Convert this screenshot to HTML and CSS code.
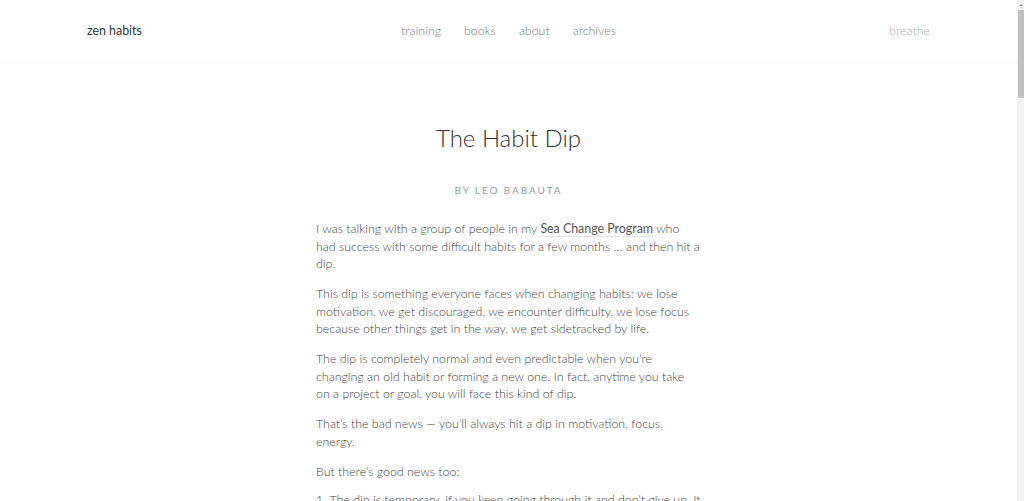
FILE: index.html
```html
<!DOCTYPE html>
<html lang="en">
<head>
<meta charset="utf-8">
<title>The Habit Dip — zen habits</title>
<link rel="stylesheet" href="styles.css">
</head>
<body>
<div class="page">
<header class="site-header">
  <a class="logo" href="#">zen habits</a>
  <nav class="main-nav">
    <a href="#">training</a>
    <a href="#">books</a>
    <a href="#">about</a>
    <a href="#">archives</a>
  </nav>
  <a class="breathe" href="#">breathe</a>
</header>
<main class="post">
  <h1 class="post-title">The Habit Dip</h1>
  <p class="byline">by Leo Babauta</p>
  <div class="post-body">
    <p>I was talking with a group of people in my <a href="#">Sea Change Program</a> who had success with some difficult habits for a few months … and then hit a dip.</p>
    <p>This dip is something everyone faces when changing habits: we lose motivation, we get discouraged, we encounter difficulty, we lose focus because other things get in the way, we get sidetracked by life.</p>
    <p>The dip is completely normal and even predictable when you’re changing an old habit or forming a new one. In fact, anytime you take on a project or goal, you will face this kind of dip.</p>
    <p>That’s the bad news — you’ll always hit a dip in motivation, focus, energy.</p>
    <p>But there’s good news too:</p>
    <ol>
      <li>The dip is temporary, if you keep going through it and don’t give up. It will pass, and you’ll come out the other side stronger.</li>
      <li>You can learn to navigate the dip, so that it doesn’t derail you. It becomes a skill you can use for any habit or project.</li>
      <li>Once you’ve gone through it a few times, you’ll know that it’s just a phase, and you won’t be so discouraged by it.</li>
    </ol>
    <p>So let’s talk about how to get through the dip.</p>
    <h2>Why We Hit the Dip</h2>
    <p>At the start of a new habit, we are excited and motivated. We have a vision of how great things will be, and that carries us through the first few weeks.</p>
    <p>But then the novelty wears off. Things get hard. Life gets in the way. We miss a day, then two, and start to feel bad about ourselves.</p>
    <p>This is when most people quit. They think they’ve failed, that they don’t have the discipline, that there’s something wrong with them.</p>
    <p>But nothing is wrong. This is just the dip, and it happens to everyone.</p>
    <h2>How to Get Through the Dip</h2>
    <p>First, expect it. Know that it’s coming, and when it arrives, greet it like an old friend: “Ah, there you are, dip.”</p>
    <p>Second, recommit. Remind yourself why you started this habit in the first place. What was the deeper reason?</p>
    <p>Third, make it easier. Lower the bar so that you can keep going even when motivation is low. Just show up.</p>
    <p>Fourth, get support. Tell someone you’re in the dip. Join a group of people who are doing the same thing.</p>
    <p>The dip is temporary. Keep going, and you’ll come out the other side.</p>
  </div>
</main>
</div>
<div class="scrollbar" aria-hidden="true">
  <div class="scroll-up"><span class="arrow"></span></div>
  <div class="scroll-thumb"></div>
  <div class="scroll-track"></div>
</div>
</body>
</html>
```

FILE: styles.css
```css
html {
  height: 100%;
  background: #fff;
  overflow: clip;
}
body {
  margin: 0;
  height: 100%;
  display: flex;
  overflow: clip;
  font-family: Lato, "Noto Sans", sans-serif;
  font-weight: 300;
  color: #555;
  background: #fff;
}
a {
  text-decoration: none;
  color: inherit;
}
.page {
  flex: 1;
  min-width: 0;
  height: 100%;
  overflow: clip;
  display: flex;
  flex-direction: column;
}
.scrollbar {
  width: 7px;
  height: 100%;
  flex: none;
  display: flex;
  flex-direction: column;
  background: #f1f1f1;
}
.scroll-up {
  height: 10px;
  display: flex;
  align-items: center;
  justify-content: center;
}
.arrow {
  width: 0;
  height: 0;
  border-left: 2px solid transparent;
  border-right: 2px solid transparent;
  border-bottom: 2px solid #a3a3a3;
}
.scroll-thumb {
  height: 88px;
  margin-left: 1px;
  background: #c1c1c1;
}
.scroll-track {
  flex: 1;
}
.site-header {
  flex: none;
  display: grid;
  grid-template-columns: 1fr auto 1fr;
  align-items: center;
  box-sizing: border-box;
  height: 64px;
  padding: 0 87px 3px 87px;
  border-bottom: 1px solid #f4f4f4;
}
.logo {
  justify-self: start;
  font-size: 12.4px;
  font-weight: 400;
  color: #333;
}
.main-nav {
  display: flex;
  gap: 23px;
  font-size: 12.4px;
  color: #777;
}
.breathe {
  justify-self: end;
  font-size: 12.4px;
  color: #aaa;
}
.post {
  flex: none;
  width: 385px;
  margin: 0 auto;
  padding-top: 59px;
}
.post-title {
  margin: 0;
  text-align: center;
  font-size: 24px;
  font-weight: 300;
  color: #333;
  line-height: 30px;
}
.byline {
  margin: 31px 0 0;
  text-align: center;
  text-transform: uppercase;
  font-size: 10px;
  letter-spacing: 1.9px;
  color: #999;
  font-weight: 400;
}
.post-body {
  margin-top: 24px;
  font-size: 12.4px;
  line-height: 17.5px;
  color: #3f3f3f;
}
.post-body p {
  margin: 0 0 12.5px;
}
.post-body a {
  color: #555;
  font-weight: 400;
  border-bottom: 1px solid #e6e6e6;
}
.post-body ol {
  margin: -2px 0 12.5px;
  padding-left: 0;
  list-style-position: inside;
}
.post-body li {
  margin-bottom: 8px;
}
.post-body h2 {
  font-size: 18px;
  font-weight: 300;
  color: #333;
  margin: 30px 0 14px;
}
```
